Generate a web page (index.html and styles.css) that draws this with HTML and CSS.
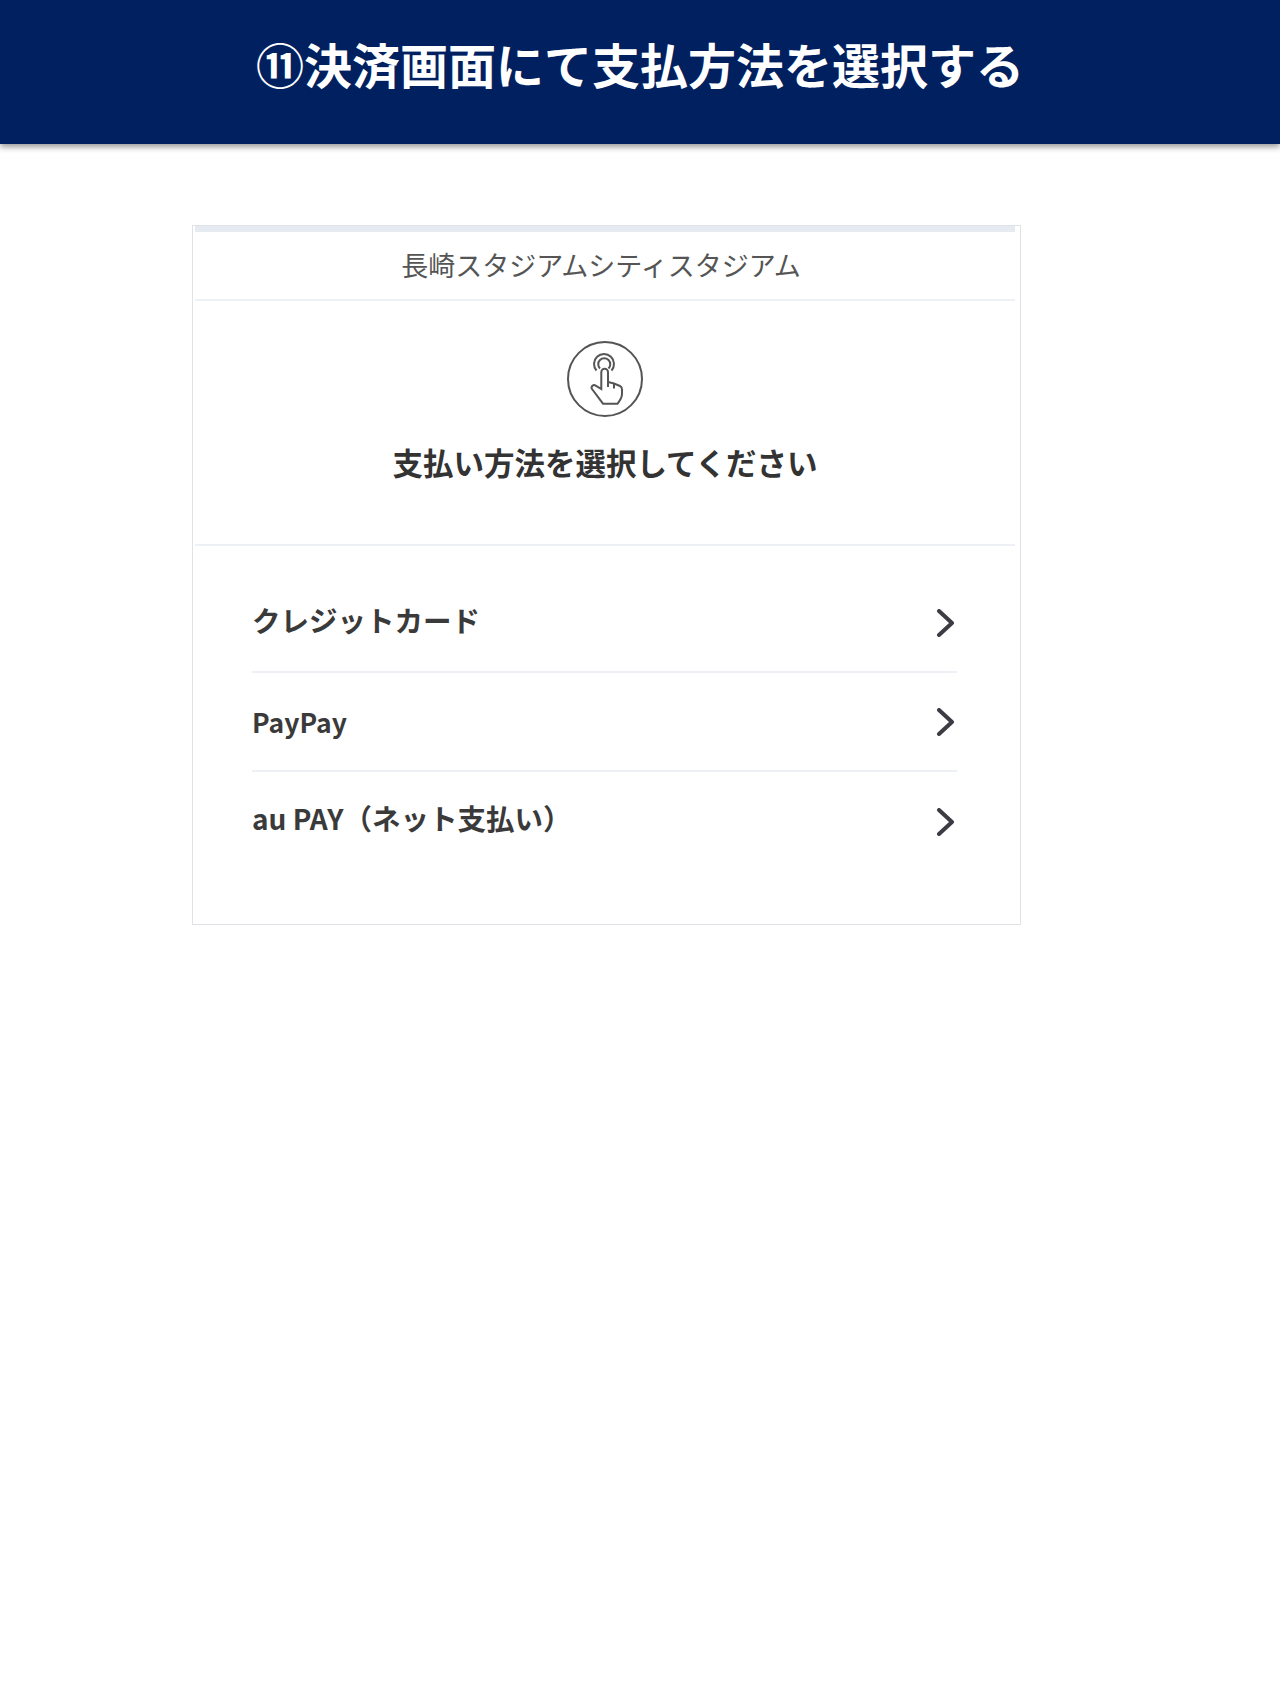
FILE: index.html
```html
<!DOCTYPE html>
<html lang="ja">
<head>
  <meta charset="UTF-8">
  <title>決済画面にて支払方法を選択する</title>
  <link rel="stylesheet" href="styles.css">
</head>
<body>

  <!-- Title bar -->
  <header class="page-head">
    <h1>⑪決済画面にて支払方法を選択する</h1>
  </header>

  <!-- Payment screen -->
  <div class="shot">
    <div class="shot-inner">
      <div class="venue">長崎スタジアムシティスタジアム</div>

      <div class="prompt">
        <svg class="tap-icon" viewBox="0 0 76 76" aria-hidden="true">
          <circle cx="38" cy="38" r="37" />
          <path d="M29.5 29.5A10 10 0 1 1 44.5 29.5" />
          <path d="M33 27.5a6 6 0 1 1 8.5 0" />
          <path class="hand" d="M34.3 48V31a3.3 3.300 0 0 1 6.700 0V41l6 1.500 6 2.500c1.500.7 2 1.800 2 3.500V53c0 4-2 6.500-4.500 9.700H36L25 48c-1.500-2.500 1.500-5.300 3.700-3.300z" />
          <path d="M47 42.500v5M41 41v5" />
        </svg>
        <h2>支払い方法を選択してください</h2>
      </div>

      <ul class="methods">
        <li class="row-card">
          <span>クレジットカード</span>
          <svg class="chevron" viewBox="0 0 20 28" aria-hidden="true"><path d="M3 2l13 12L3 26" /></svg>
        </li>
        <li>
          <span class="latin">PayPay</span>
          <svg class="chevron" viewBox="0 0 20 28" aria-hidden="true"><path d="M3 2l13 12L3 26" /></svg>
        </li>
        <li class="row-au">
          <span><span class="latin">au PAY</span>（ネット支払い）</span>
          <svg class="chevron" viewBox="0 0 20 28" aria-hidden="true"><path d="M3 2l13 12L3 26" /></svg>
        </li>
      </ul>
    </div>
  </div>

</body>
</html>
```

FILE: styles.css
```css
body {
  margin: 0;
  min-height: 1707px;
  background-color: #ffffff;
  font-family: "Noto Sans CJK JP", "Liberation Sans", sans-serif;
}

.page-head {
  height: 144px;
  box-sizing: border-box;
  padding-bottom: 18px;
  background-color: #002060;
  box-shadow: 0 3px 6px rgba(0, 0, 0, 0.4);
  display: flex;
  align-items: center;
  justify-content: center;
}

.page-head h1 {
  margin: 0;
  font-size: 48px;
  font-weight: 700;
  line-height: 1;
  color: #ffffff;
  white-space: nowrap;
}

.shot {
  box-sizing: border-box;
  width: 829px;
  height: 700px;
  margin: 81px 0 0 192px;
  border: 1px solid #dfe3e8;
  padding-left: 2px;
}

.shot-inner {
  width: 820px;
  border-top: 6px solid #e6ebf2;
}

.venue {
  height: 69px;
  border-bottom: 2px solid #edf0f4;
  box-sizing: border-box;
  padding: 0 8px 2px 0;
  display: flex;
  align-items: center;
  justify-content: center;
  font-size: 27px;
  color: #555555;
}

.prompt {
  height: 245px;
  box-sizing: border-box;
  border-bottom: 2px solid #edf0f4;
  padding-top: 40px;
  display: flex;
  flex-direction: column;
  align-items: center;
}

.tap-icon {
  width: 76px;
  height: 76px;
  fill: none;
  stroke: #555555;
  stroke-width: 2;
}

.tap-icon .hand {
  fill: #ffffff;
}

.prompt h2 {
  margin: 23px 0 0;
  font-size: 30.5px;
  font-weight: 700;
  line-height: 44px;
  color: #333333;
}

.methods {
  list-style: none;
  margin: 28px 0 0 57px;
  padding: 0;
  width: 705px;
}

.methods li {
  height: 99px;
  box-sizing: border-box;
  padding-right: 1px;
  display: flex;
  align-items: center;
  justify-content: space-between;
  font-size: 28.5px;
  font-weight: 700;
  color: #3a3a3a;
  border-bottom: 2px solid #edf0f4;
}

.methods li:last-child {
  border-bottom: none;
}

.methods .row-card > span {
  margin-bottom: 7px;
}

.methods .row-au > span {
  margin-bottom: 8px;
}

.latin {
  font-size: 26.5px;
}

.row-au .latin {
  font-size: 28px;
}

.chevron {
  width: 20px;
  height: 28px;
  fill: none;
  stroke: #3c3c44;
  stroke-width: 4;
  stroke-linecap: round;
  stroke-linejoin: round;
}
```
